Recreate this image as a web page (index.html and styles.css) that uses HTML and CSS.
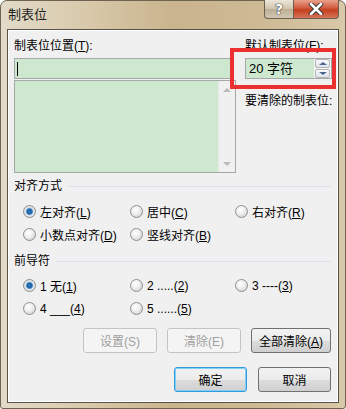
FILE: index.html
```html
<!DOCTYPE html>
<html lang="zh-CN">
<head>
    <meta charset="UTF-8">
    <title>制表位</title>
    <link rel="stylesheet" href="styles.css">
</head>
<body>
    <div class="window">
        <div class="titlebar">
            <span class="title">制表位</span>
            <div class="caption-buttons">
                <span class="cap help">?</span>
                <span class="cap close">
                    <svg width="16" height="12" viewBox="0 0 16 12">
                        <path d="M3 1 L13 11 M13 1 L3 11" stroke="#3a3a3a" stroke-width="4.6" stroke-linecap="round"/>
                        <path d="M3 1 L13 11 M13 1 L3 11" stroke="#ffffff" stroke-width="2.6" stroke-linecap="round"/>
                    </svg>
                </span>
            </div>
        </div>
        <div class="client">
            <div class="top">
                <div class="col-left">
                    <div class="label">制表位位置(<u>T</u>):</div>
                    <div class="field"><span class="caret"></span></div>
                    <div class="listbox">
                        <div class="list-area"></div>
                        <div class="scroll">
                            <span class="arr up"></span>
                            <span class="arr down"></span>
                        </div>
                    </div>
                </div>
                <div class="col-right">
                    <div class="label">默认制表位(<u>F</u>):</div>
                    <div class="spinner">
                        <div class="spin-field">20 字符</div>
                        <div class="spin-btns">
                            <span class="spin-btn"><span class="tri up"></span></span>
                            <span class="spin-btn"><span class="tri down"></span></span>
                        </div>
                        <div class="highlight"></div>
                    </div>
                    <div class="label clear-label">要清除的制表位:</div>
                </div>
            </div>

            <div class="group">对齐方式<span class="rule"></span></div>
            <div class="radios">
                <label class="radio"><span class="dot checked"></span><span>左对齐(<u>L</u>)</span></label>
                <label class="radio"><span class="dot"></span><span>居中(<u>C</u>)</span></label>
                <label class="radio"><span class="dot"></span><span>右对齐(<u>R</u>)</span></label>
                <label class="radio"><span class="dot"></span><span>小数点对齐(<u>D</u>)</span></label>
                <label class="radio"><span class="dot"></span><span>竖线对齐(<u>B</u>)</span></label>
            </div>

            <div class="group second">前导符<span class="rule"></span></div>
            <div class="radios leaders">
                <label class="radio"><span class="dot checked"></span><span>1 无(<u>1</u>)</span></label>
                <label class="radio"><span class="dot"></span><span>2 .....(<u>2</u>)</span></label>
                <label class="radio"><span class="dot"></span><span>3 ----(<u>3</u>)</span></label>
                <label class="radio"><span class="dot"></span><span>4 ___(<u>4</u>)</span></label>
                <label class="radio"><span class="dot"></span><span>5 ......(<u>5</u>)</span></label>
            </div>

            <div class="btn-row">
                <button type="button" class="btn" disabled>设置(S)</button>
                <button type="button" class="btn" disabled>清除(E)</button>
                <button type="button" class="btn wide">全部清除(<u>A</u>)</button>
            </div>
            <div class="btn-row last">
                <button type="button" class="btn default">确定</button>
                <button type="button" class="btn">取消</button>
            </div>
        </div>
    </div>
</body>
</html>
```

FILE: styles.css
```css
body {
    margin: 0;
    padding: 0;
    background: #ffffff;
    font-family: "Liberation Sans", "Noto Sans CJK SC", sans-serif;
    font-size: 12px;
    color: #000;
}
u {
    text-decoration: underline;
    text-underline-offset: 1px;
}
.window {
    width: 346px;
    height: 409px;
    box-sizing: border-box;
    border-radius: 7px 7px 3px 3px;
    border: 1px solid #6e6451;
    background: linear-gradient(90deg, #e3dbc9 0%, #d8c9aa 25%, #c9b48d 50%, #cdb993 75%, #d8c9aa 100%);
    display: flex;
    flex-direction: column;
}
.titlebar {
    height: 28px;
    display: flex;
    justify-content: space-between;
    align-items: flex-start;
}
.title {
    margin: 5px 0 0 7px;
    font-size: 13px;
    line-height: 18px;
    color: #1e1e1e;
}
.caption-buttons {
    display: flex;
    margin-right: 6px;
    margin-top: -1px;
}
.cap {
    height: 19px;
    display: flex;
    align-items: center;
    justify-content: center;
    border: 1px solid #6b6050;
    border-top: none;
    box-sizing: border-box;
}
.help {
    width: 29px;
    border-radius: 0 0 0 4px;
    border-right: none;
    background: linear-gradient(#ece6da, #cfc3ad 50%, #bcae94 51%, #d2c7b3);
    font-family: "DejaVu Sans", sans-serif;
    font-weight: bold;
    font-size: 14px;
    color: #fff;
    text-shadow: 0 0 1px #333, 0 0 1px #333, 0 0 1px #333;
}
.close {
    width: 46px;
    border-radius: 0 0 4px 0;
    background: linear-gradient(#e8a08a, #d1593c 45%, #c2401f 55%, #d8725a);
}
.client {
    margin: 0 6px 5px 6px;
    flex: 1;
    background: #f0f0f0;
    border: 1px solid #57524a;
    box-shadow: inset 0 0 0 1px #ffffff;
    padding: 8px 7px 0 6px;
    box-sizing: border-box;
}
.top {
    display: grid;
    grid-template-columns: 222px auto;
    column-gap: 9px;
}
.label {
    line-height: 16px;
    height: 16px;
    white-space: nowrap;
}
.field {
    margin-top: 4px;
    width: 217px;
    height: 21px;
    box-sizing: border-box;
    border: 1px solid #a5a7ab;
    background: #cde8cf;
    padding: 3px 2px;
}
.caret {
    display: block;
    width: 1px;
    height: 14px;
    background: #000;
}
.listbox {
    margin-top: 1px;
    height: 93px;
    box-sizing: border-box;
    border: 1px solid #a5a7ab;
    display: flex;
    background: #cde8cf;
}
.list-area {
    flex: 1;
}
.scroll {
    width: 16px;
    background: #f0f0f0;
    border-left: 1px solid #e8e8e8;
    display: flex;
    flex-direction: column;
    justify-content: space-between;
    align-items: center;
    padding: 7px 0 6px;
}
.arr {
    width: 0;
    height: 0;
    border-left: 4px solid transparent;
    border-right: 4px solid transparent;
}
.arr.up {
    border-bottom: 4px solid #b9b9b9;
}
.arr.down {
    border-top: 4px solid #b9b9b9;
}
.spinner {
    position: relative;
    margin-top: 4px;
    width: 87px;
    height: 21px;
    box-sizing: border-box;
    border: 1px solid #a5a7ab;
    display: flex;
    background: #f4f4f4;
}
.spin-field {
    width: 68px;
    background: #cde8cf;
    font-size: 13px;
    line-height: 19px;
    padding-left: 3px;
    box-sizing: border-box;
}
.spin-btns {
    flex: 1;
    display: flex;
    flex-direction: column;
    gap: 1px;
    padding: 0 1px;
}
.spin-btn {
    flex: 1;
    border: 1px solid #b4b4b4;
    border-radius: 2px;
    background: linear-gradient(#f8f9fb, #dde3ea);
    display: flex;
    align-items: center;
    justify-content: center;
}
.tri {
    width: 0;
    height: 0;
    border-left: 4px solid transparent;
    border-right: 4px solid transparent;
}
.tri.up {
    border-bottom: 3px solid #4c6490;
}
.tri.down {
    border-top: 3px solid #4c6490;
}
.highlight {
    position: absolute;
    left: -16px;
    top: -11px;
    width: 106px;
    height: 41px;
    box-sizing: border-box;
    border: 4px solid #ec2f2f;
}
.clear-label {
    margin-top: 14px;
}
.group {
    margin-top: 5px;
    line-height: 16px;
    display: flex;
    align-items: center;
    gap: 6px;
    padding-right: 0;
}
.group.second {
    margin-top: 7px;
}
.rule {
    flex: 1;
    height: 1px;
    background: #d9e1ea;
}
.radios {
    margin-top: 6px;
    padding-left: 9px;
    display: grid;
    grid-template-columns: 107px 105px auto;
    grid-auto-rows: 23px;
}
.leaders {
    margin-top: 5px;
}
.radio {
    display: flex;
    align-items: center;
    gap: 4px;
    white-space: nowrap;
}
.dot {
    width: 13px;
    height: 13px;
    box-sizing: border-box;
    border-radius: 50%;
    border: 1px solid #8e8f8f;
    background: radial-gradient(circle at 40% 35%, #ffffff 0%, #f0f0f0 40%, #c8c8c8 100%);
}
.dot.checked {
    background: radial-gradient(circle at 50% 50%, #2f7ec8 0, #1d5f9e 2.5px, #8cc0ea 3.5px, #e8e8e8 4.2px, #d2d2d2 100%);
}
.btn-row {
    margin-top: 8px;
    display: flex;
    justify-content: flex-end;
    gap: 10px;
}
.btn-row.last {
    margin-top: 14px;
    gap: 11px;
}
.btn {
    width: 74px;
    height: 25px;
    font-family: "Liberation Sans", "Noto Sans CJK SC", sans-serif;
    font-size: 12px;
    color: #000;
    border: 1px solid #707070;
    border-radius: 3px;
    background: linear-gradient(#f2f2f2 0%, #ebebeb 50%, #dddddd 51%, #cfcfcf 100%);
    padding: 0;
}
.btn.wide {
    width: 80px;
}
.btn:disabled {
    color: #a0a0a0;
    border-color: #c4c4c4;
    background: #f4f4f4;
}
.btn.default {
    width: 73px;
    border-color: #3399dd;
    box-shadow: inset 0 0 0 1px #7fd1f5;
}
.btn-row.last .btn {
    width: 73px;
}
```
